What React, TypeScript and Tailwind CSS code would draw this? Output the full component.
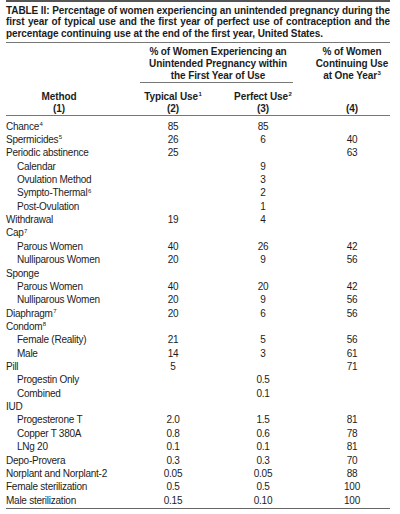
import React from "react";

type Row = { m: string; sup?: string; ind?: boolean; t?: string; p?: string; c?: string };

const rows: Row[] = [
  { m: "Chance", sup: "4", t: "85", p: "85" },
  { m: "Spermicides", sup: "5", t: "26", p: "6", c: "40" },
  { m: "Periodic abstinence", t: "25", c: "63" },
  { m: "Calendar", ind: true, p: "9" },
  { m: "Ovulation Method", ind: true, p: "3" },
  { m: "Sympto-Thermal", sup: "6", ind: true, p: "2" },
  { m: "Post-Ovulation", ind: true, p: "1" },
  { m: "Withdrawal", t: "19", p: "4" },
  { m: "Cap", sup: "7" },
  { m: "Parous Women", ind: true, t: "40", p: "26", c: "42" },
  { m: "Nulliparous Women", ind: true, t: "20", p: "9", c: "56" },
  { m: "Sponge" },
  { m: "Parous Women", ind: true, t: "40", p: "20", c: "42" },
  { m: "Nulliparous Women", ind: true, t: "20", p: "9", c: "56" },
  { m: "Diaphragm", sup: "7", t: "20", p: "6", c: "56" },
  { m: "Condom", sup: "8" },
  { m: "Female (Reality)", ind: true, t: "21", p: "5", c: "56" },
  { m: "Male", ind: true, t: "14", p: "3", c: "61" },
  { m: "Pill", t: "5", c: "71" },
  { m: "Progestin Only", ind: true, p: "0.5" },
  { m: "Combined", ind: true, p: "0.1" },
  { m: "IUD" },
  { m: "Progesterone T", ind: true, t: "2.0", p: "1.5", c: "81" },
  { m: "Copper T 380A", ind: true, t: "0.8", p: "0.6", c: "78" },
  { m: "LNg 20", ind: true, t: "0.1", p: "0.1", c: "81" },
  { m: "Depo-Provera", t: "0.3", p: "0.3", c: "70" },
  { m: "Norplant and Norplant-2", t: "0.05", p: "0.05", c: "88" },
  { m: "Female sterilization", t: "0.5", p: "0.5", c: "100" },
  { m: "Male sterilization", t: "0.15", p: "0.10", c: "100" },
];

function Sup({ children }: { children: React.ReactNode }) {
  return (
    <span className="relative -top-[3.5px] ml-[0.5px] text-[6px] leading-none tracking-normal">
      {children}
    </span>
  );
}

function JustLine({ text }: { text: string }) {
  return (
    <div className="flex justify-between whitespace-nowrap">
      {text.split(" ").map((w, i) => (
        <span key={i}>{w}</span>
      ))}
    </div>
  );
}

export default function App() {
  return (
    <div
      className="min-h-[514px] w-[400px] bg-white text-[#1c1c1c]"
      style={{ fontFamily: '"Liberation Sans", Arial, sans-serif' }}
    >
      <div className="ml-[6px] w-[384px] border-t-2 border-[#555]">
        {/* Title */}
        <div className="border-b border-[#777] pb-[3px] pt-[3px] text-[10px] font-bold leading-[11.3px] tracking-[-0.1px]">
          <JustLine text="TABLE II: Percentage of women experiencing an unintended pregnancy during the" />
          <JustLine text="first year of typical use and the first year of perfect use of contraception and the" />
          <div className="whitespace-nowrap">
            percentage continuing use at the end of the first year, United States.
          </div>
        </div>

        {/* Header */}
        <div className="grid grid-cols-[122px_180px_82px] border-b border-[#777] pt-[3px] text-[10px] font-bold leading-[12px] tracking-[-0.1px]">
          <div className="flex flex-col justify-end pr-[16px] text-center">
            <div>Method</div>
            <div>(1)</div>
          </div>
          <div className="flex flex-col">
            <div className="ml-[12px] mr-[15px] border-b border-[#777] text-center">
              <div className="-ml-[12px] -mr-[15px]">
                <div>% of Women Experiencing an</div>
                <div>Unintended Pregnancy within</div>
                <div>the First Year of Use</div>
              </div>
            </div>
            <div className="mt-[8px] grid grid-cols-2 text-center">
              <div>
                <div>
                  Typical Use<Sup>1</Sup>
                </div>
                <div>(2)</div>
              </div>
              <div>
                <div>
                  Perfect Use<Sup>2</Sup>
                </div>
                <div>(3)</div>
              </div>
            </div>
          </div>
          <div className="flex flex-col justify-between pl-[6px] text-center">
            <div>
              <div>% of Women</div>
              <div>Continuing Use</div>
              <div>
                at One Year<Sup>3</Sup>
              </div>
            </div>
            <div>(4)</div>
          </div>
        </div>

        {/* Body */}
        <div className="border-b border-[#666] pb-[1px] pt-[3.7px] text-[10px] leading-[13.36px] tracking-[-0.25px]">
          {rows.map((r, i) => (
            <div key={i} className="grid h-[13.36px] grid-cols-[122px_90px_90px_82px]">
              <div className={r.ind ? "whitespace-nowrap pl-[11px]" : "whitespace-nowrap"}>
                {r.m}
                {r.sup ? <Sup>{r.sup}</Sup> : null}
              </div>
              <div className="text-center">{r.t ?? ""}</div>
              <div className="text-center">{r.p ?? ""}</div>
              <div className="pl-[6px] text-center">{r.c ?? ""}</div>
            </div>
          ))}
        </div>
      </div>
    </div>
  );
}
